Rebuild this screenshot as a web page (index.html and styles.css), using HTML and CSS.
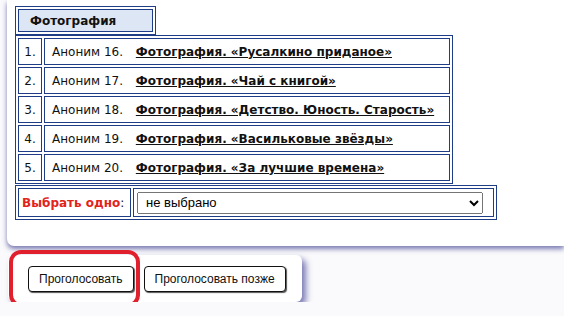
FILE: index.html
```html
<!DOCTYPE html>
<html lang="ru">
<head>
    <meta charset="UTF-8">
    <title>Голосование</title>
    <link rel="stylesheet" href="styles.css">
</head>
<body>
    <div class="poll">
        <table class="poll-title">
            <tr><td>Фотография</td></tr>
        </table>

        <table class="poll-list">
            <tr>
                <td class="num">1.</td>
                <td class="item">Аноним 16. <a href="#">Фотография. «Русалкино приданое»</a></td>
            </tr>
            <tr>
                <td class="num">2.</td>
                <td class="item">Аноним 17. <a href="#">Фотография. «Чай с книгой»</a></td>
            </tr>
            <tr>
                <td class="num">3.</td>
                <td class="item">Аноним 18. <a href="#">Фотография. «Детство. Юность. Старость»</a></td>
            </tr>
            <tr>
                <td class="num">4.</td>
                <td class="item">Аноним 19. <a href="#">Фотография. «Васильковые звёзды»</a></td>
            </tr>
            <tr>
                <td class="num">5.</td>
                <td class="item">Аноним 20. <a href="#">Фотография. «За лучшие времена»</a></td>
            </tr>
        </table>

        <table class="poll-choice">
            <tr>
                <td class="label"><span class="required">Выбрать одно</span>:</td>
                <td class="field">
                    <select>
                        <option>не выбрано</option>
                        <option>1</option>
                        <option>2</option>
                        <option>3</option>
                        <option>4</option>
                        <option>5</option>
                    </select>
                </td>
            </tr>
        </table>
    </div>

    <div class="actions">
        <button>Проголосовать</button>
        <button>Проголосовать позже</button>
        <div class="mark"></div>
    </div>
</body>
</html>
```

FILE: styles.css
```css
body {
    margin: 0;
    background: #fafafc;
    font-family: 'DejaVu Sans', Verdana, sans-serif;
    font-size: 12px;
    color: #111;
}

.poll {
    margin-left: 7px;
    padding: 6px 0 26px 8px;
    background: #fff;
    border-bottom-left-radius: 7px;
    box-shadow: 0 3px 5px rgba(90, 90, 160, 0.8);
}

table {
    border-collapse: separate;
    border-spacing: 2px;
    border: 1px solid #1f3d87;
}

td {
    border: 1px solid #1f3d87;
    padding: 0;
}

.poll-title td {
    width: 98px;
    height: 21px;
    padding: 0 24px 0 11px;
    background: #dce6f4;
    font-weight: bold;
}

.poll-list {
    width: 438px;
}

.poll-list td {
    height: 25px;
}

.num {
    width: 22px;
    text-align: center;
}

.item {
    padding-left: 7px;
}

.item a {
    margin-left: 9px;
    color: #111;
    font-weight: bold;
}

.poll-choice {
    width: 482px;
    margin-top: 1px;
}

.poll-choice td {
    height: 27px;
}

.label {
    width: 108px;
    padding-left: 3px;
}

.required {
    color: #e2231a;
    font-weight: bold;
}

.field {
    padding: 0 0 0 3px;
}

select {
    width: 346px;
    height: 22px;
    font-family: 'Liberation Sans', Arial, sans-serif;
    font-size: 13px;
    padding-left: 4px;
}

.actions {
    position: relative;
    display: flex;
    gap: 10px;
    width: fit-content;
    margin: 9px 0 0 8px;
    padding: 11px 16px 10px 20px;
    background: #fff;
    border-radius: 6px;
    box-shadow: 4px 4px 6px rgba(100, 100, 170, 0.85);
}

button {
    height: 26px;
    padding: 0 10px;
    background: #fff;
    border: 1px solid #111;
    border-radius: 4px;
    box-shadow: 1px 1px 1px #555;
    font-family: 'Liberation Sans', Arial, sans-serif;
    font-size: 12px;
    color: #111;
}

.mark {
    position: absolute;
    left: 1px;
    top: -5px;
    width: 131px;
    height: 57px;
    box-sizing: border-box;
    border: 4px solid #e0202c;
    border-radius: 12px;
}
```
